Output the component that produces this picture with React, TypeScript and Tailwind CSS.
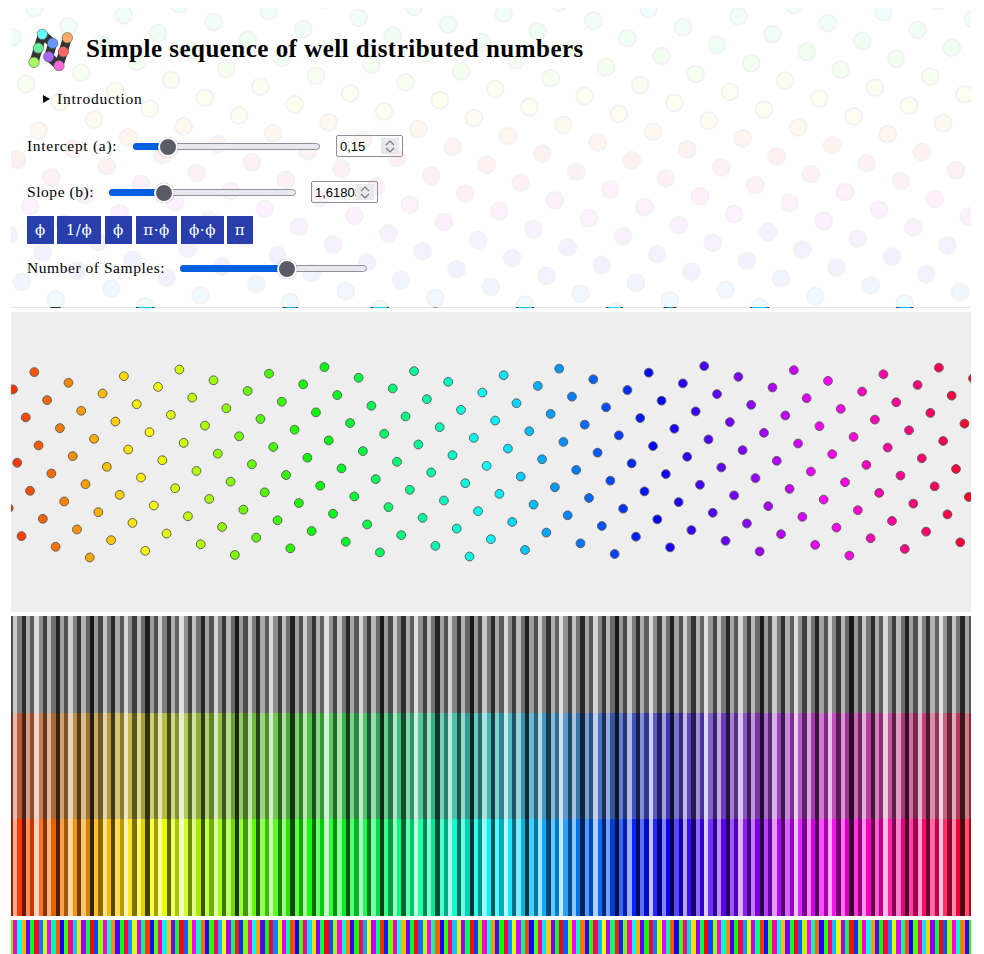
import React from "react";

const B = 1.6180339887;
const frac = (x: number) => x - Math.floor(x);
const idx = Array.from({ length: 227 }, (_, i) => i);
const xAt = (i: number) => 8.7 + 4.267 * i - 11;
const val = (i: number) => frac(0.26 + B * i);
const hueAt = (i: number) => 10.5 + 1.51 * i;

function Background() {
  const dots: { x: number; y: number; h: number }[] = [];
  idx.forEach((i) => {
    const f = frac(0.15 + B * i);
    const y0 = 38.3 + 320 * (0.7649 - f);
    [y0, y0 + 320].forEach((y) => {
      if (y > -12 && y < 312) dots.push({ x: xAt(i), y, h: 178 - 1.125 * y });
    });
  });
  return (
    <svg width="960" height="300" className="absolute left-0 top-0">
      {dots.map((d, k) => (
        <circle key={k} cx={d.x} cy={d.y - 8} r="8.4" fill={`hsl(${d.h},100%,50%)`} stroke="#333" strokeWidth="2" />
      ))}
    </svg>
  );
}

function Logo() {
  const pts: [number, number, string][] = [
    [34, 62.3, "#aaff66"],
    [38.3, 48, "#66ee99"],
    [42.3, 34.3, "#66ffff"],
    [52.7, 43.3, "#6699ff"],
    [48.7, 56.7, "#aa66ff"],
    [59, 65.7, "#ff66dd"],
    [63.3, 51.7, "#ff6666"],
    [67.3, 37.7, "#ffaa66"],
  ];
  return (
    <svg width="45" height="43" viewBox="28 28 45 43" className="shrink-0">
      <polyline points={pts.map((p) => `${p[0]},${p[1]}`).join(" ")} fill="none" stroke="#333" strokeWidth="9" strokeLinejoin="round" />
      {pts.map((p, i) => (
        <circle key={i} cx={p[0]} cy={p[1]} r="5.2" fill={p[2]} stroke="#555" strokeWidth="0.6" />
      ))}
    </svg>
  );
}

function Slider({ fill, left }: { fill: string; left: string }) {
  return (
    <div className="relative h-[7px] w-[187px] shrink-0 rounded-full border border-[#8f8f9d] bg-[#e9e9ed]">
      <div className={`absolute -inset-y-px -left-px rounded-full bg-[#0060df] ${fill}`} />
      <div className={`absolute -top-[7px] h-[20px] w-[20px] rounded-full border-2 border-white bg-[#5b5b66] shadow-[0_0_1px_rgba(0,0,0,0.5)] ${left}`} />
    </div>
  );
}

function Spin({ value, cls }: { value: string; cls: string }) {
  return (
    <div className={`relative flex h-[22px] w-[67px] shrink-0 items-center overflow-hidden rounded-[2px] border border-[#8f8f9d] pl-[3px] font-['Liberation_Sans',sans-serif] text-[13px] leading-none text-black ${cls}`}>
      <span>{value}</span>
      <div className="absolute right-[3px] top-[2px] flex h-[16px] w-[18px] flex-col items-center justify-center gap-[1px] bg-[#e9e9ed]">
        <svg width="10" height="6" viewBox="0 0 10 6"><path d="M1 5 L5 1 L9 5" fill="none" stroke="#77777f" strokeWidth="1.2" /></svg>
        <svg width="10" height="6" viewBox="0 0 10 6"><path d="M1 1 L5 5 L9 1" fill="none" stroke="#77777f" strokeWidth="1.2" /></svg>
      </div>
    </div>
  );
}

function Btn({ children, cls }: { children: React.ReactNode; cls: string }) {
  return (
    <button className={`flex h-[28px] items-center justify-center bg-[#283eab] text-[15px] leading-none tracking-[0.6px] text-white ${cls}`}>
      {children}
    </button>
  );
}

function Scatter() {
  return (
    <svg width="960" height="300" className="mt-[4px] block bg-[#eeeeee]">
      {idx.map((i) => (
        <circle key={i} cx={xAt(i)} cy={558 - 192 * val(i) - 312} r="4.4" fill={`hsl(${hueAt(i)},100%,50%)`} stroke="#606060" strokeWidth="1" />
      ))}
    </svg>
  );
}

function Stripes() {
  return (
    <svg width="960" height="300" className="mt-[4px] block" shapeRendering="crispEdges">
      {idx.map((i) => {
        const v = val(i);
        const g = Math.round(22 + 205 * v);
        const gray = `rgb(${g},${g},${g})`;
        const col = `hsl(${hueAt(i)},100%,${10 + 80 * v}%)`;
        return (
          <g key={i}>
            <rect x={xAt(i)} y="0" width="4.3" height="97" fill={gray} />
            <rect x={xAt(i)} y="97" width="4.3" height="106" fill={col} />
            <rect x={xAt(i)} y="97" width="4.3" height="106" fill={gray} fillOpacity="0.5" />
            <rect x={xAt(i)} y="203" width="4.3" height="97" fill={col} />
          </g>
        );
      })}
    </svg>
  );
}

function Pure() {
  return (
    <svg width="960" height="34" className="mt-[4px] block" shapeRendering="crispEdges">
      {idx.map((i) => (
        <rect key={i} x={xAt(i)} y="0" width="4.3" height="34" fill={`hsl(${360 * val(i)},100%,50%)`} />
      ))}
    </svg>
  );
}

export default function App() {
  return (
    <div className="h-[954px] w-[984px] overflow-hidden bg-white pl-[11px] pt-[8px] font-['Liberation_Serif',serif] text-black">
      <div className="w-[960px]">
        <header className="relative h-[300px] overflow-hidden">
          <div className="absolute bottom-0 left-0 h-px w-full bg-[#e2e2e2]" />
          <Background />
          <div className="absolute left-0 top-0 h-[299px] w-full bg-white/[0.94]" />
          <div className="relative flex flex-col">
            <div className="ml-[17px] mt-[20px] flex items-center">
              <Logo />
              <h1 className="ml-[13px] pb-[3px] text-[25px] font-bold leading-none tracking-[0.48px]">Simple sequence of well distributed numbers</h1>
            </div>
            <details className="ml-[32px] mt-[18px] h-[20px] text-[15.5px] leading-[20px] tracking-[0.75px]">
              <summary className="flex list-none items-center">
                <svg width="7" height="8" viewBox="0 0 7 8" className="shrink-0"><path d="M0 0 L7 4 L0 8 Z" fill="#000" /></svg>
                <span className="ml-[7px]">Introduction</span>
              </summary>
            </details>
            <div className="ml-[16px] mt-[26px] flex h-[22px] items-center">
              <span className="w-[106px] shrink-0 text-[15.5px] tracking-[0.7px]">Intercept (a):</span>
              <Slider fill="w-[35px]" left="left-[24px]" />
              <Spin value="0,15" cls="ml-[16px]" />
            </div>
            <div className="ml-[16px] mt-[24px] flex h-[22px] items-center">
              <span className="w-[82px] shrink-0 text-[15.5px] tracking-[0.55px]">Slope (b):</span>
              <Slider fill="w-[55px]" left="left-[44px]" />
              <Spin value="1,61803" cls="ml-[15px]" />
            </div>
            <div className="ml-[16px] mt-[13px] flex font-['DejaVu_Serif','Liberation_Serif',serif]">
              <Btn cls="w-[27px]">ϕ</Btn>
              <Btn cls="ml-[3px] w-[44px]">1/ϕ</Btn>
              <Btn cls="ml-[4px] w-[27px]">ϕ</Btn>
              <Btn cls="ml-[4px] w-[41px]">π·ϕ</Btn>
              <Btn cls="ml-[4px] w-[43px]">ϕ·ϕ</Btn>
              <Btn cls="ml-[3px] w-[26px]">π</Btn>
            </div>
            <div className="ml-[16px] mt-[13px] flex h-[22px] items-center">
              <span className="w-[153px] shrink-0 text-[15.5px] tracking-[0.55px]">Number of Samples:</span>
              <Slider fill="w-[107px]" left="left-[96px]" />
            </div>
          </div>
        </header>
        <Scatter />
        <Stripes />
        <Pure />
      </div>
    </div>
  );
}
